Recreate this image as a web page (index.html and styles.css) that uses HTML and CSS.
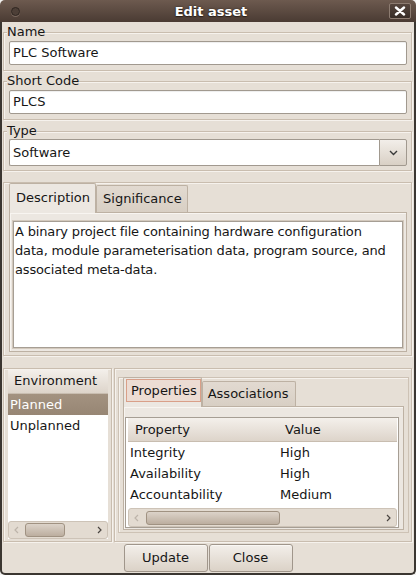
FILE: index.html
```html
<!DOCTYPE html>
<html>
<head>
<meta charset="utf-8">
<title>Edit asset</title>
<link rel="stylesheet" href="styles.css">
</head>
<body>
<div class="window">
  <div class="titlebar">
    <span class="title-dot"></span>
    <span class="title">Edit asset</span>
    <span class="title-close"><svg width="12" height="10" viewBox="0 0 12 10"><path d="M2 1.5 L10 8.5 M10 1.5 L2 8.5" stroke="#fff" stroke-width="2.4" stroke-linecap="round" fill="none"/></svg></span>
  </div>
  <div class="client">
    <fieldset class="frame">
      <legend class="frame-label">Name</legend>
      <div class="entry">PLC Software</div>
    </fieldset>
    <fieldset class="frame">
      <legend class="frame-label">Short Code</legend>
      <div class="entry">PLCS</div>
    </fieldset>
    <fieldset class="frame frame-type">
      <legend class="frame-label">Type</legend>
      <div class="combo">
        <div class="combo-text">Software</div>
        <div class="combo-btn"><svg width="9" height="6" viewBox="0 0 9 6"><path d="M1 1 L4.5 4.5 L8 1" stroke="#3a3a3a" stroke-width="1.4" fill="none"/></svg></div>
      </div>
    </fieldset>

    <div class="desc-frame">
      <div class="nb-tabs">
        <div class="nb-tab active">Description</div>
        <div class="nb-tab">Significance</div>
      </div>
      <div class="nb-page desc-page">
        <div class="scroll-frame">
          <div class="textview">A binary project file containing hardware configuration<br>data, module parameterisation data, program source, and<br>associated meta-data.</div>
        </div>
      </div>
    </div>

    <div class="lower">
      <div class="env-frame">
        <div class="env-list">
          <div class="list-header">Environment</div>
          <div class="list-row selected">Planned</div>
          <div class="list-row">Unplanned</div>
          <div class="list-fill"></div>
          <div class="hscroll env-scroll">
            <span class="arrow dis"><svg width="5" height="8" viewBox="0 0 5 8"><path d="M4 1 L1 4 L4 7" stroke="#bdb4aa" stroke-width="1.2" fill="none"/></svg></span>
            <div class="track"><div class="thumb" style="margin-left:1px;width:40px"></div></div>
            <span class="arrow"><svg width="5" height="8" viewBox="0 0 5 8"><path d="M1 1 L4 4 L1 7" stroke="#4a4541" stroke-width="1.2" fill="none"/></svg></span>
          </div>
        </div>
      </div>
      <div class="props-frame">
        <div class="props-inner">
          <div class="nb-tabs small-tabs">
            <div class="nb-tab active props-tab"><span class="tab-focus">Properties</span></div>
            <div class="nb-tab assoc-tab">Associations</div>
          </div>
          <div class="nb-page props-page">
            <div class="tree">
              <div class="tree-header">
                <div class="th col1">Property</div>
                <div class="th col2">Value</div>
              </div>
              <div class="tree-body">
                <div class="tr"><div class="td col1">Integrity</div><div class="td col2">High</div></div>
                <div class="tr"><div class="td col1">Availability</div><div class="td col2">High</div></div>
                <div class="tr"><div class="td col1">Accountability</div><div class="td col2">Medium</div></div>
              </div>
              <div class="hscroll tree-scroll">
                <span class="arrow dis"><svg width="5" height="8" viewBox="0 0 5 8"><path d="M4 1 L1 4 L4 7" stroke="#bdb4aa" stroke-width="1.2" fill="none"/></svg></span>
                <div class="track"><div class="thumb" style="margin-left:2px;width:134px"></div></div>
                <span class="arrow"><svg width="5" height="8" viewBox="0 0 5 8"><path d="M1 1 L4 4 L1 7" stroke="#4a4541" stroke-width="1.2" fill="none"/></svg></span>
              </div>
            </div>
          </div>
        </div>
      </div>
    </div>

    <div class="buttons">
      <div class="btn">Update</div>
      <div class="btn">Close</div>
    </div>
  </div>
</div>
</body>
</html>
```
FILE: styles.css
```css
html, body {
  margin: 0;
  padding: 0;
  background: #f2f1ef;
}
body {
  font-family: "DejaVu Sans", sans-serif;
  font-size: 13px;
  color: #161616;
}
* { box-sizing: border-box; }

.window {
  width: 416px;
  height: 575px;
  display: flex;
  flex-direction: column;
}

/* title bar */
.titlebar {
  height: 22px;
  flex: none;
  display: grid;
  grid-template-columns: 1fr auto 1fr;
  align-items: center;
  padding: 0 5px 0 11px;
  background: linear-gradient(#6d5a4f, #4a3b33);
  border-radius: 5px 5px 0 0;
}
.title-dot {
  width: 9px;
  height: 9px;
  border-radius: 50%;
  background: #4d3f37;
  border: 1px solid #2e2520;
  box-shadow: 0 1px 0 #7a685d;
}
.title {
  color: #fff;
  font-weight: bold;
  font-size: 13px;
  text-shadow: 0 0 2px #2a201a, 0 1px 1px #2a201a;
}
.title-close {
  justify-self: end;
  width: 22px;
  height: 16px;
  border: 1px solid #8d7c71;
  border-radius: 2px;
  background: linear-gradient(#55453c, #382d27);
  display: flex;
  align-items: center;
  justify-content: center;
}

/* client */
.client {
  flex: 1;
  min-height: 0;
  display: flex;
  flex-direction: column;
  background: #e6dfd6;
  border: 2px solid #3b3631;
  border-top: 0;
  border-radius: 0 0 5px 5px;
  padding: 0 2px 1px 1px;
}

.frame {
  margin: 2px 0 0 0;
  padding: 0 4px 5px 3px;
  border: 1px solid #c9bdaf;
  box-shadow: inset 1px 1px 0 #f6f2ed, 1px 1px 0 #f6f2ed;
  min-width: 0;
}
.frame-type { margin-top: 3px; padding-bottom: 4px; }
.frame-label {
  padding: 0;
  line-height: 16px;
  background: #e6dfd6;
}
.entry {
  margin: 1px 0 0 2px;
  height: 24px;
  border: 1px solid #a1998f;
  border-radius: 2px;
  background: #fff;
  padding: 0 3px;
  line-height: 22px;
  box-shadow: inset 0 1px 1px rgba(0,0,0,0.07);
}
.combo {
  display: flex;
  height: 27px;
  margin-left: 2px;
}
.combo-text {
  flex: 1;
  border: 1px solid #a1998f;
  border-right: 0;
  border-radius: 2px 0 0 2px;
  background: #fff;
  padding: 0 3px;
  line-height: 25px;
}
.combo-btn {
  width: 28px;
  border: 1px solid #a1998f;
  border-radius: 0 2px 2px 0;
  background: linear-gradient(#f2eee9, #d9d0c5);
  display: flex;
  align-items: center;
  justify-content: center;
}

/* description notebook */
.desc-frame {
  flex: none;
  margin-top: 11px;
  height: 174px;
  border: 1px solid #c9bdaf;
  box-shadow: inset 1px 1px 0 #f6f2ed, 1px 1px 0 #f6f2ed;
  padding: 0 4px 3px 5px;
  display: flex;
  flex-direction: column;
}
.nb-tabs {
  display: flex;
  height: 29px;
  align-items: flex-end;
  flex: none;
}
.nb-tab {
  height: 27px;
  line-height: 26px;
  border: 1px solid #bdb1a3;
  border-bottom: 0;
  border-radius: 2px 2px 0 0;
  background: linear-gradient(#e2dad1, #d8cfc4);
  padding: 0 5px 0 6px;
  white-space: nowrap;
}
.nb-tab.active {
  height: 30px;
  line-height: 28px;
  margin-bottom: -1px;
  position: relative;
  z-index: 1;
  background: #ece7e1;
}
.nb-page {
  flex: 1;
  min-height: 0;
  border: 1px solid #bdb1a3;
  background: #ece7e1;
  box-shadow: inset 1px 1px 0 #f8f5f1;
  display: flex;
  flex-direction: column;
}
.desc-page { padding: 7px 2px 2px 2px; }
.scroll-frame {
  flex: 1;
  display: flex;
  border: 1px solid #d3c9bd;
}
.textview {
  flex: 1;
  border: 1px solid #a69e94;
  background: #fff;
  padding: 0 1px;
  line-height: 19px;
  white-space: nowrap;
  letter-spacing: -0.16px;
}

/* lower section */
.lower {
  flex: none;
  margin-top: 12px;
  height: 174px;
  display: flex;
  gap: 2px;
}
.env-frame {
  width: 109px;
  border: 1px solid #c9bdaf;
  box-shadow: inset 1px 1px 0 #f6f2ed, 1px 1px 0 #f6f2ed;
  padding: 1px 3px 2px 4px;
  display: flex;
}
.env-list {
  flex: 1;
  display: flex;
  flex-direction: column;
  background: #fff;
}
.list-header {
  height: 24px;
  line-height: 22px;
  padding-left: 6px;
  background: linear-gradient(#f3efea, #ddd4ca);
  border-bottom: 1px solid #c8bdb0;
  flex: none;
}
.list-row {
  height: 21px;
  line-height: 21px;
  padding-left: 2px;
  flex: none;
}
.list-row.selected {
  background: linear-gradient(#a39280, #978674);
  color: #fff;
}
.list-fill { flex: 1; }

.hscroll {
  display: flex;
  align-items: center;
  border: 1px solid #cdc3b7;
  border-radius: 3px;
  background: #e3dbd1;
  flex: none;
}
.env-scroll { height: 18px; }
.tree-scroll { height: 19px; }
.arrow {
  width: 15px;
  flex: none;
  display: flex;
  align-items: center;
  justify-content: center;
}
.track {
  flex: 1;
  display: flex;
  align-items: center;
  height: 100%;
}
.thumb {
  height: 14px;
  border: 1px solid #a09282;
  border-radius: 3px;
  background: linear-gradient(#dcd3c9, #bcae9f);
}

.props-frame {
  flex: 1;
  border: 1px solid #c9bdaf;
  box-shadow: inset 1px 1px 0 #f6f2ed, 1px 1px 0 #f6f2ed;
  padding: 8px 2px 8px 3px;
  display: flex;
}
.props-inner {
  flex: 1;
  border: 1px solid #cdc2b5;
  box-shadow: inset 1px 1px 0 #f6f2ed;
  padding: 1px 4px 2px 4px;
  display: flex;
  flex-direction: column;
}
.small-tabs { height: 27px; }
.props-tab {
  height: 28px;
  padding: 1px 0 0 2px;
  line-height: normal;
}
.tab-focus {
  display: block;
  border: 1px solid #d99f88;
  background: #ecdcd3;
  padding: 0 3px 0 4px;
  line-height: 21px;
}
.assoc-tab {
  height: 25px;
  line-height: 24px;
  padding: 0 6px 0 5px;
}
.props-page { padding: 10px 4px 1px 1px; }
.tree {
  flex: 1;
  display: flex;
  flex-direction: column;
  border: 1px solid #a69e94;
  background: #fff;
  padding: 0 1px 0 2px;
}
.tree-header {
  display: flex;
  height: 24px;
  line-height: 23px;
  background: linear-gradient(#f4f0eb, #ddd4ca);
  border-bottom: 1px solid #c8bdb0;
  flex: none;
}
.col1 { width: 152px; flex: none; }
.col2 { flex: 1; }
.th.col1 { padding-left: 7px; }
.th.col2 { padding-left: 5px; }
.tree-body { flex: 1; }
.tr {
  display: flex;
  height: 21px;
  line-height: 21px;
}
.td.col1 { padding-left: 2px; }
.td.col2 { padding-left: 0; }

/* buttons */
.buttons {
  flex: none;
  display: flex;
  justify-content: center;
  gap: 1px;
  margin-top: 2px;
  padding-left: 1px;
}
.btn {
  width: 84px;
  height: 28px;
  line-height: 26px;
  text-align: center;
  border: 1px solid #a0968b;
  border-radius: 3px;
  background: linear-gradient(#f3efea, #dbd2c7);
  box-shadow: inset 0 1px 0 #faf8f5;
}
```
